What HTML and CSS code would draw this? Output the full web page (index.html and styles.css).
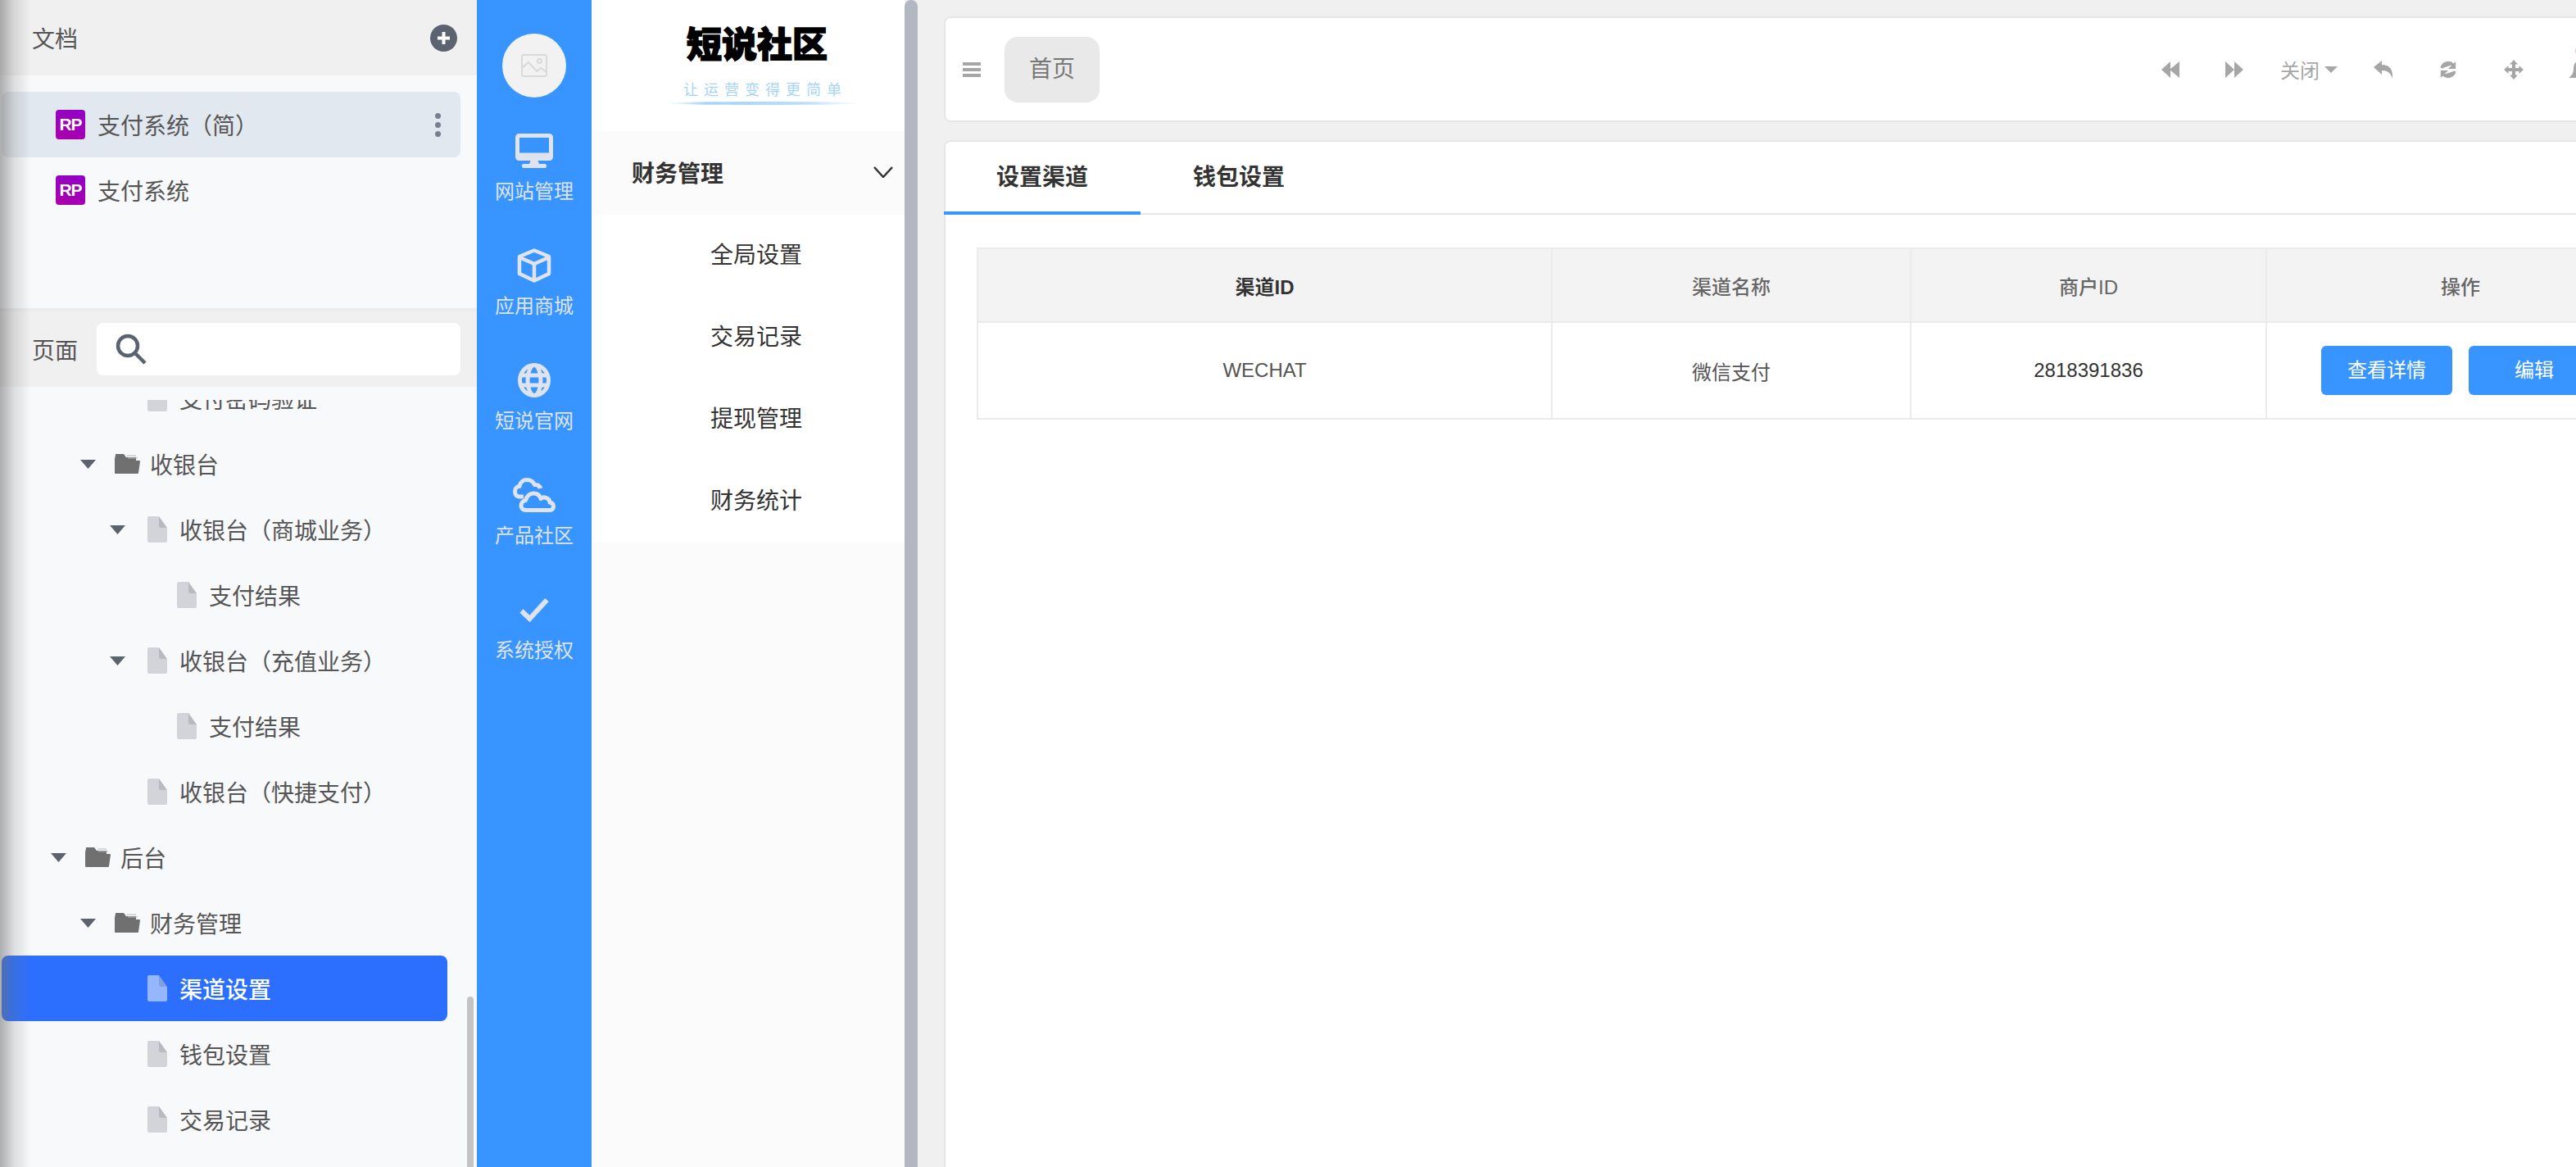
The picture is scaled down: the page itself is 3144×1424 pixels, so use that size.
FILE: index.html
```html
<!DOCTYPE html>
<html lang="zh-CN">

<head>
    <meta charset="UTF-8">
    <meta name="viewport" content="width=device-width, initial-scale=1.0">
    <title>渠道设置</title>
    <link rel="stylesheet" href="styles.css">
</head>

<body>
    <svg class="sprite">
        <symbol id="i-file" viewBox="0 0 24 32">
            <path d="M2 0H14L24 14V30a2 2 0 0 1-2 2H2a2 2 0 0 1-2-2V2a2 2 0 0 1 2-2z" fill="currentColor" />
            <path d="M14 0L24 14H16a2 2 0 0 1-2-2z" fill="#000" fill-opacity=".12" />
        </symbol>
        <symbol id="i-folder" viewBox="0 0 31 24">
            <path d="M1 0H11L14 4H26V8H1z" fill="#6f6f6f" />
            <path d="M15 2H26M16 5H28" stroke="#b5b5b5" stroke-width="1" />
            <path d="M0 1V23a1 1 0 0 0 1 1H28a1 1 0 0 0 1-1L31 9a1 1 0 0 0-1-1H10L8 6H1z" fill="#707070" />
        </symbol>
        <symbol id="i-tri" viewBox="0 0 19 11">
            <path d="M0 0H19L9.5 11z" fill="#5b6270" />
        </symbol>
    </svg>

    <aside class="docs">
        <div class="docs-head">
            <span>文档</span>
            <svg class="add-btn" viewBox="0 0 33 33">
                <circle cx="16.5" cy="16.5" r="16.5" fill="#5b6270" />
                <path d="M16.5 9v15M9 16.5h15" stroke="#fff" stroke-width="4" />
            </svg>
        </div>
        <ul class="doc-list">
            <li class="doc-item doc-on">
                <span class="rp">RP</span>
                <span class="doc-name">支付系统（简）</span>
                <span class="more"><i></i><i></i><i></i></span>
            </li>
            <li class="doc-item">
                <span class="rp">RP</span>
                <span class="doc-name">支付系统</span>
            </li>
        </ul>
        <div class="page-head">
            <span>页面</span>
            <div class="search">
                <svg viewBox="0 0 38 38">
                    <circle cx="15" cy="15" r="12" fill="none" stroke="#5b6270" stroke-width="4.5" />
                    <path d="M23.5 23.5L36 36" stroke="#5b6270" stroke-width="4.5" />
                </svg>
            </div>
        </div>
        <div class="tree">
            <ul class="tree-list">
                <li class="row lv2"><svg class="file"><use href="#i-file" /></svg><span>支付密码验证</span></li>
                <li class="row lv1 has-tri"><svg class="tri"><use href="#i-tri" /></svg><svg class="folder"><use href="#i-folder" /></svg><span>收银台</span></li>
                <li class="row lv2 has-tri"><svg class="tri"><use href="#i-tri" /></svg><svg class="file"><use href="#i-file" /></svg><span>收银台（商城业务）</span></li>
                <li class="row lv3"><svg class="file"><use href="#i-file" /></svg><span>支付结果</span></li>
                <li class="row lv2 has-tri"><svg class="tri"><use href="#i-tri" /></svg><svg class="file"><use href="#i-file" /></svg><span>收银台（充值业务）</span></li>
                <li class="row lv3"><svg class="file"><use href="#i-file" /></svg><span>支付结果</span></li>
                <li class="row lv2"><svg class="file"><use href="#i-file" /></svg><span>收银台（快捷支付）</span></li>
                <li class="row lv0 has-tri"><svg class="tri"><use href="#i-tri" /></svg><svg class="folder"><use href="#i-folder" /></svg><span>后台</span></li>
                <li class="row lv1 has-tri"><svg class="tri"><use href="#i-tri" /></svg><svg class="folder"><use href="#i-folder" /></svg><span>财务管理</span></li>
                <li class="row lv2 row-on"><svg class="file"><use href="#i-file" /></svg><span>渠道设置</span></li>
                <li class="row lv2"><svg class="file"><use href="#i-file" /></svg><span>钱包设置</span></li>
                <li class="row lv2"><svg class="file"><use href="#i-file" /></svg><span>交易记录</span></li>
            </ul>
            <div class="tree-bar"></div>
        </div>
        <div class="docs-shade"></div>
    </aside>

    <nav class="side">
        <div class="avatar">
            <svg viewBox="0 0 32 28" fill="none" stroke="#d9d9d9" stroke-width="2">
                <rect x="1" y="1" width="30" height="26" rx="2" />
                <path d="M1 17L9 10L19 21L24 17L31 22" />
                <circle cx="22.500" cy="8.500" r="2.500" />
            </svg>
        </div>
        <a class="side-item">
            <svg viewBox="0 0 46 42" fill="none" stroke="#dfe3ee" stroke-width="5">
                <rect x="2.500" y="2.500" width="41" height="28" rx="2" />
                <path d="M2 26h42" />
                <path d="M19 32h8l2 5H17z" fill="#dfe3ee" stroke="none" />
                <rect x="8" y="37" width="30" height="5" rx="2" fill="#dfe3ee" stroke="none" />
            </svg>
            <span>网站管理</span>
        </a>
        <a class="side-item">
            <svg viewBox="0 0 42 42" fill="none" stroke="#dfe3ee" stroke-width="4.500" stroke-linejoin="round">
                <path d="M21 2.500L39 10V31L21 39.500L3 31V10z" />
                <path d="M3 11L21 19L39 11M21 19V39" />
            </svg>
            <span>应用商城</span>
        </a>
        <a class="side-item">
            <svg viewBox="0 0 40 42" fill="none" stroke="#dfe3ee" stroke-width="5">
                <ellipse cx="20" cy="21" rx="17.500" ry="18.500" />
                <ellipse cx="20" cy="21" rx="8" ry="18.500" />
                <path d="M3 15H37M3 27H37" />
            </svg>
            <span>短说官网</span>
        </a>
        <a class="side-item">
            <svg viewBox="0 0 52 42" fill="none" stroke="#dfe3ee" stroke-width="5" stroke-linejoin="round">
                <path d="M13 23H8C4 23 2.500 20 2.500 16.500C2.500 13 5 10.500 8 10.500C9 5 13 2.500 17 2.500C22 2.500 25 5 26.500 8.500C30 8 33 10 33.500 13" />
                <path d="M16 39.500C12 39.500 10 37 10 34C10 30.500 12.500 28 15.500 27.500C17 22 21 19 25 19C30 19 33 22 34 25.500C36 22.500 45 24 45 30C48 30.500 49.500 32.500 49.500 35C49.500 38 47.500 39.500 45 39.500z" />
            </svg>
            <span>产品社区</span>
        </a>
        <a class="side-item">
            <svg class="side-check" viewBox="0 0 36 30" fill="none" stroke="#dfe3ee" stroke-width="6">
                <path d="M2.500 16.500L12.500 26L33.500 3" />
            </svg>
            <span>系统授权</span>
        </a>
    </nav>

    <section class="sub">
        <div class="brand">
            <div class="brand-name">短说社区</div>
            <div class="brand-slogan">让运营变得更简单</div>
            <div class="brand-line"></div>
        </div>
        <div class="sub-group">
            <span>财务管理</span>
            <svg viewBox="0 0 24 14" fill="none" stroke="#333" stroke-width="2.500"><path d="M1 1L12 13L23 1" /></svg>
        </div>
        <ul class="sub-list">
            <li>全局设置</li>
            <li>交易记录</li>
            <li>提现管理</li>
            <li>财务统计</li>
        </ul>
        <div class="sub-rest"></div>
    </section>
    <div class="sub-bar"></div>

    <main class="main">
        <header class="topbar">
            <div class="burger"><i></i><i></i><i></i></div>
            <div class="chip">首页</div>
            <div class="tools">
                <svg class="t-back" viewBox="0 0 22 20"><path d="M0 10L11 0V20zM10 10L22 0V20z" /></svg>
                <svg class="t-next" viewBox="0 0 22 20"><path d="M0 0L11 10V0L22 10L11 20V10L0 20z" /></svg>
                <span class="t-close">关闭<b></b></span>
                <svg class="t-reply" viewBox="0 0 24 22"><path d="M0 8L10 0V5C19 5 24 10 23 22C21 15 17 12 10 12V17z" /></svg>
                <svg class="t-sync" viewBox="0 0 24 24" fill="none" stroke="#a6a6a6" stroke-width="4">
                    <path d="M3.500 10A9 9 0 0 1 18.500 5.500" />
                    <path d="M20.500 14A9 9 0 0 1 5.500 18.500" />
                    <path d="M22 1V11H12zM2 23V13H12z" fill="#a6a6a6" stroke="none" />
                </svg>
                <svg class="t-move" viewBox="0 0 24 24"><path d="M12 0L17 5.500H14V10H18.500V7L24 12L18.500 17V14H14V18.500H17L12 24L7 18.500H10V14H5.500V17L0 12L5.500 7V10H10V5.500H7z" /></svg>
                <span class="t-user">
                    <svg viewBox="0 0 22 20"><path d="M11 0C6 0 5 5 5 9C5 14 3 17 0 19V20H22V19C19 17 17 14 17 9C17 5 16 0 11 0z" /></svg>
                    <i class="t-dot"></i>
                </span>
            </div>
        </header>
        <div class="card">
            <div class="tabs">
                <div class="tab tab-on">设置渠道</div>
                <div class="tab">钱包设置</div>
            </div>
            <table class="grid">
                <colgroup>
                    <col class="c1">
                    <col class="c2">
                    <col class="c3">
                    <col class="c4">
                </colgroup>
                <thead>
                    <tr>
                        <th class="th-dark">渠道ID</th>
                        <th>渠道名称</th>
                        <th>商户ID</th>
                        <th>操作</th>
                    </tr>
                </thead>
                <tbody>
                    <tr>
                        <td>WECHAT</td>
                        <td>微信支付</td>
                        <td class="td-dark">2818391836</td>
                        <td class="td-btns"><a class="btn">查看详情</a><a class="btn">编辑</a></td>
                    </tr>
                </tbody>
            </table>
        </div>
    </main>
</body>

</html>
```

FILE: styles.css
```css
* {
    margin: 0;
    padding: 0;
    box-sizing: border-box;
}

html,
body {
    height: 1424px;
    overflow: hidden;
}

body {
    display: flex;
    background: #f0f0f0;
    font-family: "Liberation Sans", "Noto Sans CJK SC", sans-serif;
    color: #555;
}

li {
    list-style: none;
}

.sprite {
    display: none;
}

/* 文档面板 */
.docs {
    position: relative;
    display: flex;
    flex-direction: column;
    flex: 0 0 582px;
    height: 1424px;
    background: #f8f9fb;
    font-size: 28px;
}

.docs-head {
    display: flex;
    justify-content: space-between;
    align-items: center;
    height: 92px;
    padding: 0 24px 0 39px;
    background: #f0f0f0;
}

.add-btn {
    width: 33px;
    height: 33px;
}

.doc-list {
    height: 288px;
    padding-top: 20px;
    border-bottom: 4px solid #ececec;
}

.doc-item {
    display: flex;
    align-items: center;
    width: 560px;
    height: 80px;
    margin-left: 2px;
    padding: 0 24px 0 66px;
    border-radius: 8px;
}

.doc-on {
    background: #e2e8f0;
}

.rp {
    width: 36px;
    height: 36px;
    margin-right: 15px;
    border-radius: 4px;
    background: linear-gradient(20deg, #ad00ab, #8f00c8);
    color: #fff;
    font-size: 21px;
    font-weight: bold;
    line-height: 36px;
    letter-spacing: -1px;
    text-align: center;
}

.doc-name {
    flex: 1;
}

.more {
    display: flex;
    flex-direction: column;
    gap: 4px;
}

.more i {
    width: 7px;
    height: 7px;
    border-radius: 50%;
    background: #76808e;
}

.page-head {
    display: flex;
    align-items: center;
    height: 92px;
    padding: 0 20px 0 39px;
    background: #f0f0f0;
}

.search {
    display: flex;
    align-items: center;
    flex: 1;
    height: 64px;
    margin-left: 23px;
    padding-left: 23px;
    border-radius: 8px;
    background: #fff;
}

.search svg {
    width: 38px;
    height: 38px;
}

.tree {
    position: relative;
    flex: 1;
    margin-top: 16px;
    overflow: hidden;
}

.tree-list {
    margin-top: -42px;
}

.row {
    display: flex;
    align-items: center;
    height: 80px;
    margin-left: 2px;
    width: 544px;
    border-radius: 8px;
}

.row .tri {
    width: 19px;
    height: 11px;
    margin-right: 23px;
}

.row .folder {
    width: 31px;
    height: 24px;
    margin-right: 12px;
}

.row .file {
    width: 24px;
    height: 32px;
    margin-right: 15px;
    color: #d2d4da;
}

.row.has-tri .file {
    margin-left: 4px;
}

.lv0 {
    padding-left: 60px;
}

.lv1 {
    padding-left: 96px;
}

.lv2 {
    padding-left: 178px;
}

.lv3 {
    padding-left: 214px;
}

.row.has-tri.lv2 {
    padding-left: 132px;
}

.row-on {
    background: #2c6fff;
    color: #fff;
    font-weight: 500;
}

.row-on .file {
    color: #94b7ff;
}

.tree-bar {
    position: absolute;
    right: 4px;
    bottom: 0;
    width: 8px;
    height: 208px;
    border-radius: 4px 4px 0 0;
    background: #c4c4c6;
}

.docs-shade {
    position: absolute;
    top: 0;
    left: 0;
    width: 38px;
    height: 100%;
    background: linear-gradient(to right, rgba(110, 110, 110, .55), rgba(110, 110, 110, .2) 45%, rgba(110, 110, 110, 0));
}

/* 蓝色导航 */
.side {
    flex: 0 0 140px;
    height: 1424px;
    padding-top: 41px;
    background: #3895ff;
}

.avatar {
    display: flex;
    justify-content: center;
    align-items: center;
    width: 78px;
    height: 78px;
    margin: 0 auto 44px;
    border-radius: 50%;
    background: #f2f2f2;
}

.avatar svg {
    width: 32px;
    height: 28px;
}

.side-item {
    display: flex;
    flex-direction: column;
    justify-content: space-between;
    align-items: center;
    height: 87px;
    margin-bottom: 53px;
    color: #dfe3ee;
    font-size: 24px;
    line-height: 32px;
}

.side-item svg {
    height: 42px;
    width: 52px;
}

.side-item .side-check {
    width: 36px;
    height: 30px;
    margin-top: 6px;
}

/* 二级菜单 */
.sub {
    display: flex;
    flex-direction: column;
    flex: 0 0 382px;
    height: 1424px;
    background: #fff;
    color: #333;
    font-size: 28px;
}

.brand {
    position: relative;
    height: 160px;
    padding-top: 24px;
    text-align: center;
}

.brand-name {
    padding-left: 22px;
    color: #000;
    font-size: 43px;
    font-weight: 900;
    line-height: 62px;
    -webkit-text-stroke: 1.5px #000;
}

.brand-slogan {
    margin-top: 12px;
    color: #a5d4fb;
    font-size: 18px;
    line-height: 24px;
    letter-spacing: 7px;
    text-indent: 42px;
}

.brand-line {
    position: absolute;
    top: 124px;
    left: 92px;
    width: 236px;
    height: 4px;
    border-radius: 50%;
    background: linear-gradient(to right, rgba(165, 212, 251, 0), #a5d4fb 20%, #b8defc 70%, rgba(165, 212, 251, 0));
}

.sub-group {
    display: flex;
    justify-content: space-between;
    align-items: center;
    height: 102px;
    padding: 0 14px 2px 49px;
    background: #fbfbfb;
    font-weight: bold;
}

.sub-group svg {
    width: 24px;
    height: 14px;
}

.sub-list li {
    height: 100px;
    padding-left: 145px;
    line-height: 100px;
}

.sub-rest {
    flex: 1;
    background: #fbfbfb;
}

.sub-bar {
    flex: 0 0 16px;
    height: 1424px;
    border-radius: 8px 8px 0 0;
    background: #b2b8c2;
}

/* 主内容 */
.main {
    flex: 1;
    min-width: 0;
    height: 1424px;
    padding: 20px 0 0 32px;
    overflow: hidden;
}

.topbar {
    display: flex;
    align-items: center;
    width: 2100px;
    height: 129px;
    padding-left: 21px;
    border: 2px solid #e6e6e6;
    border-radius: 8px;
    background: #fff;
}

.burger {
    display: flex;
    flex-direction: column;
    gap: 3px;
    width: 22px;
}

.burger i {
    height: 4px;
    background: #a6a6a6;
}

.chip {
    width: 116px;
    height: 80px;
    margin-left: 29px;
    border-radius: 16px;
    background: #e9e9e9;
    color: #777;
    font-size: 28px;
    line-height: 80px;
    text-align: center;
}

.tools {
    display: flex;
    align-items: center;
    margin-left: 1296px;
    color: #a6a6a6;
    font-size: 24px;
}

.tools svg {
    fill: #a6a6a6;
}

.t-back,
.t-next {
    width: 22px;
    height: 20px;
}

.t-next {
    margin-left: 56px;
}

.t-close {
    display: flex;
    align-items: center;
    margin-left: 45px;
}

.t-close b {
    margin-left: 6px;
    border-top: 8px solid #a6a6a6;
    border-left: 8px solid transparent;
    border-right: 8px solid transparent;
}

.t-reply {
    width: 24px;
    height: 22px;
    margin-left: 44px;
}

.t-sync {
    width: 22px;
    height: 22px;
    margin-left: 56px;
}

.t-move {
    width: 24px;
    height: 24px;
    margin-left: 57px;
}

.t-user {
    position: relative;
    flex: none;
    width: 22px;
    height: 20px;
    margin-left: 56px;
}

.t-user svg {
    display: block;
    width: 22px;
    height: 20px;
}

.t-dot {
    position: absolute;
    top: -20px;
    left: 7px;
    width: 14px;
    height: 14px;
    border-radius: 50%;
    background: #f7c5cf;
}

.card {
    width: 2100px;
    height: 1300px;
    margin-top: 22px;
    border: 2px solid #e6e6e6;
    border-radius: 8px;
    background: #fff;
}

.tabs {
    display: flex;
    height: 89px;
    border-bottom: 2px solid #e6e6e6;
}

.tab {
    width: 240px;
    height: 89px;
    border-bottom: 4px solid transparent;
    color: #333;
    font-size: 28px;
    font-weight: bold;
    line-height: 88px;
    text-align: center;
}

.tab-on {
    margin-left: -2px;
    border-bottom-color: #3895ff;
}

.grid {
    width: 2047px;
    margin: 40px 0 0 38px;
    border-collapse: collapse;
    table-layout: fixed;
    font-size: 24px;
}

.c1 {
    width: 701px;
}

.c2 {
    width: 438px;
}

.c3 {
    width: 434px;
}

.c4 {
    width: 474px;
}

.grid th,
.grid td {
    border: 2px solid #ebebeb;
    text-align: center;
}

.grid th {
    height: 90px;
    background: #f3f3f3;
    color: #666;
    font-weight: 500;
}

.grid td {
    height: 118px;
}

.grid .th-dark {
    color: #333;
    font-weight: bold;
}

.td-dark {
    color: #333;
}

.btn {
    display: inline-block;
    width: 160px;
    height: 60px;
    border-radius: 6px;
    background: #3895ff;
    color: #fff;
    line-height: 60px;
}

.btn+.btn {
    margin-left: 20px;
}
```
